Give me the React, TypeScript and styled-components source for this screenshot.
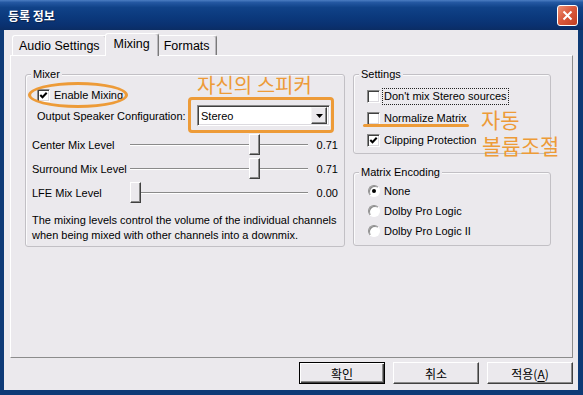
import styled, { createGlobalStyle } from 'styled-components';

const ORANGE = '#ED9B38';
const FACE = '#EBE9ED';

const GlobalStyle = createGlobalStyle`
  html, body {
    margin: 0;
    padding: 0;
    background: #ffffff;
  }
  body {
    font-family: 'Liberation Sans', 'Noto Sans CJK KR', sans-serif;
    font-size: 11px;
    color: #000;
  }
  *, *::before, *::after {
    box-sizing: border-box;
  }
`;

const Window = styled.div`
  width: 583px;
  height: 395px;
  display: flex;
  flex-direction: column;
  background: #0d3a76;
  overflow: hidden;
`;

const TitleBar = styled.div`
  height: 30px;
  flex: none;
  display: flex;
  align-items: center;
  justify-content: space-between;
  padding: 0 5px 0 8px;
  background: linear-gradient(
    180deg,
    #4c7dc2 0%,
    #2458a2 8%,
    #104288 25%,
    #0b387b 60%,
    #0a3170 85%,
    #0b2d64 100%
  );
`;

const Title = styled.span`
  color: #fff;
  font-family: 'Noto Sans CJK KR', sans-serif;
  font-weight: 700;
  font-size: 12px;
  text-shadow: 1px 1px 0 #08204a;
`;

const CloseButton = styled.div`
  width: 21px;
  height: 21px;
  border: 1px solid #fff;
  border-radius: 3px;
  background: linear-gradient(135deg, #ec9074 0%, #da5a3d 45%, #c23f22 100%);
  display: flex;
  align-items: center;
  justify-content: center;
`;

const Frame = styled.div`
  flex: 1;
  display: flex;
  padding: 0 5px 5px 4px;
`;

const Client = styled.div`
  flex: 1;
  display: flex;
  flex-direction: column;
  background: ${FACE};
  padding: 3px 5px 0 6px;
`;

const TabStrip = styled.div`
  height: 22px;
  flex: none;
  display: flex;
  align-items: flex-end;
  padding-left: 2px;
`;

const Tab = styled.div<{ $active?: boolean }>`
  position: relative;
  z-index: ${(p) => (p.$active ? 1 : 0)};
  height: ${(p) => (p.$active ? 23 : 20)}px;
  margin: ${(p) => (p.$active ? '0 -2px -1px -2px' : '0')};
  padding: ${(p) => (p.$active ? '0 8px 2px' : '0 6px')};
  display: flex;
  align-items: center;
  font-size: 12.5px;
  background: ${FACE};
  border: 1px solid;
  border-bottom: none;
  border-color: #fff #7a7a7a #fff #fff;
  border-radius: 3px 3px 0 0;
  box-shadow: inset -1px 0 0 #b9b7bc;
`;

const Panel = styled.div`
  height: 303px;
  flex: none;
  display: flex;
  align-items: flex-start;
  gap: 8px;
  padding: 12px 21px 0 14px;
  border: 1px solid;
  border-color: #fff #8c8c8c #8c8c8c #fff;
`;

const GroupBox = styled.fieldset<{ $width: number }>`
  width: ${(p) => p.$width}px;
  min-width: 0;
  margin: 0;
  padding: 0;
  border: 1px solid #c2c0c5;
  border-radius: 3px;
  box-shadow: inset 1px 1px 0 #fbfbfc;
`;

const GroupLabel = styled.legend`
  margin-left: 5px;
  padding: 0 2px;
  line-height: 13px;
  font-size: 11px;
  background: ${FACE};
`;

const RightColumn = styled.div`
  display: flex;
  flex-direction: column;
  gap: 12px;
`;

const MixerBody = styled.div`
  display: flex;
  flex-direction: column;
  padding: 0 0 3px 6px;
`;

const OptionList = styled.div<{ $pad: string }>`
  display: flex;
  flex-direction: column;
  padding: ${(p) => p.$pad};
`;

const OptionRow = styled.div<{ $h: number }>`
  position: relative;
  height: ${(p) => p.$h}px;
  width: fit-content;
  display: flex;
  align-items: center;
  gap: 2px;
`;

const EnableRow = styled(OptionRow)`
  margin: 6px 0 0 5px;
`;

const OptionText = styled.span<{ $focused?: boolean }>`
  line-height: 13px;
  padding: 1px;
  border: 1px dotted ${(p) => (p.$focused ? '#222' : 'transparent')};
  white-space: nowrap;
`;

const CheckBox = styled.span`
  width: 13px;
  height: 13px;
  flex: none;
  display: flex;
  align-items: center;
  justify-content: center;
  background: #fff;
  border: 1px solid;
  border-color: #8a8a8a #fff #fff #8a8a8a;
  box-shadow: inset 1px 1px 0 #404040, inset -1px -1px 0 #dcdadf;
`;

const Radio = styled.span<{ $checked?: boolean }>`
  position: relative;
  width: 12px;
  height: 12px;
  flex: none;
  border-radius: 50%;
  background: #fff;
  border: 1px solid;
  border-color: #8f8f8f #fff #fff #8f8f8f;
  box-shadow: inset 1px 1px 0 #8a8a8a;
  &::after {
    content: '';
    display: ${(p) => (p.$checked ? 'block' : 'none')};
    position: absolute;
    left: 3px;
    top: 3px;
    width: 4px;
    height: 4px;
    border-radius: 50%;
    background: #000;
  }
`;

const OutputRow = styled.div`
  height: 21px;
  margin: 2px 0 0 5px;
  display: flex;
  align-items: center;
`;

const OutputLabel = styled.span`
  width: 160px;
  flex: none;
  white-space: nowrap;
`;

const ComboWrap = styled.div`
  position: relative;
  width: 133px;
  height: 21px;
`;

const ComboBox = styled.div`
  width: 100%;
  height: 100%;
  display: flex;
  align-items: center;
  justify-content: space-between;
  padding: 2px 2px 2px 3px;
  background: #fff;
  border: 1px solid;
  border-color: #8a8a8a #fff #fff #8a8a8a;
  box-shadow: inset 1px 1px 0 #404040, inset -1px -1px 0 #dcdadf;
`;

const DropButton = styled.span`
  width: 16px;
  height: 17px;
  display: flex;
  align-items: center;
  justify-content: center;
  background: ${FACE};
  border: 1px solid;
  border-color: #f4f4f4 #404040 #404040 #f4f4f4;
  box-shadow: inset -1px -1px 0 #8a8a8a;
`;

const SliderGroup = styled.div`
  display: flex;
  flex-direction: column;
  margin-top: 7px;
`;

const SliderRow = styled.div`
  height: 24px;
  display: flex;
  align-items: center;
`;

const SliderLabel = styled.span`
  width: 98px;
  flex: none;
  white-space: nowrap;
`;

const Track = styled.div`
  position: relative;
  width: 178px;
  height: 24px;
  display: flex;
  align-items: center;
`;

const TrackLine = styled.div`
  width: 100%;
  height: 2px;
  border-top: 1px solid #8a8a8a;
  border-bottom: 1px solid #fff;
`;

const Thumb = styled.div`
  position: absolute;
  top: 1px;
  width: 11px;
  height: 21px;
  background: ${FACE};
  border: 1px solid;
  border-color: #fff #404040 #404040 #fff;
  box-shadow: inset -1px -1px 0 #8a8a8a;
`;

const SliderValue = styled.span`
  width: 22px;
  margin-left: 8px;
  text-align: right;
`;

const Description = styled.p`
  margin: 8px 0 0;
  line-height: 15px;
`;

const ButtonRow = styled.div`
  display: flex;
  justify-content: flex-end;
  gap: 8px;
  margin-top: 4px;
`;

const DialogButton = styled.button<{ $default?: boolean }>`
  width: 86px;
  height: 22px;
  padding: 0;
  font-family: 'Noto Sans CJK KR', 'Liberation Sans', sans-serif;
  font-size: 12px;
  color: #000;
  background: ${FACE};
  border: 1px solid;
  border-color: ${(p) => (p.$default ? '#000' : '#fff #404040 #404040 #fff')};
  box-shadow: ${(p) =>
    p.$default
      ? 'inset 1px 1px 0 #fff, inset -1px -1px 0 #404040, inset -2px -2px 0 #8a8a8a'
      : 'inset -1px -1px 0 #8a8a8a'};
  u {
    text-underline-offset: 2px;
  }
`;

const Ellipse = styled.span`
  position: absolute;
  left: -9px;
  top: -5px;
  width: 100px;
  height: 26px;
  border: 3px solid ${ORANGE};
  border-radius: 50%;
  pointer-events: none;
`;

const Highlight = styled.span`
  position: absolute;
  left: -9px;
  top: -8px;
  width: 146px;
  height: 36px;
  border: 3.5px solid ${ORANGE};
  border-radius: 4px;
  pointer-events: none;
`;

const Underline = styled.span`
  position: absolute;
  left: -4px;
  top: 17px;
  width: 106px;
  height: 3px;
  border-radius: 2px;
  background: ${ORANGE};
`;

const Note = styled.span<{ $left: number; $top: number; $size?: number }>`
  position: absolute;
  left: ${(p) => p.$left}px;
  top: ${(p) => p.$top}px;
  font-family: 'Noto Sans CJK KR', sans-serif;
  font-size: ${(p) => p.$size ?? 20}px;
  line-height: 22px;
  color: ${ORANGE};
  white-space: nowrap;
  pointer-events: none;
`;

const levels = [
  { label: 'Center Mix Level', value: 0.71 },
  { label: 'Surround Mix Level', value: 0.71 },
  { label: 'LFE Mix Level', value: 0 },
];

const settings = [
  { label: "Don't mix Stereo sources", checked: false, focused: true },
  { label: 'Normalize Matrix', checked: false, note: '자동', underline: true },
  { label: 'Clipping Protection', checked: true, note: '볼륨조절' },
];

const encodings = ['None', 'Dolby Pro Logic', 'Dolby Pro Logic II'];

function CheckMark() {
  return (
    <svg width="9" height="9" viewBox="0 0 9 9">
      <path d="M1.3 4 L3.5 6.3 L7.7 1.8" fill="none" stroke="#000" strokeWidth="2" />
    </svg>
  );
}

function App() {
  return (
    <>
      <GlobalStyle />
      <Window>
        <TitleBar>
          <Title>등록 정보</Title>
          <CloseButton>
            <svg width="11" height="11" viewBox="0 0 11 11">
              <path d="M1.5 1.5 L9.5 9.5 M9.5 1.5 L1.5 9.5" stroke="#fff" strokeWidth="2" />
            </svg>
          </CloseButton>
        </TitleBar>
        <Frame>
          <Client>
            <TabStrip>
              <Tab>Audio Settings</Tab>
              <Tab $active>Mixing</Tab>
              <Tab>Formats</Tab>
            </TabStrip>
            <Panel>
              <GroupBox $width={320}>
                <GroupLabel>Mixer</GroupLabel>
                <MixerBody>
                  <EnableRow $h={16}>
                    <CheckBox>
                      <CheckMark />
                    </CheckBox>
                    <OptionText>Enable Mixing</OptionText>
                    <Ellipse />
                  </EnableRow>
                  <OutputRow>
                    <OutputLabel>Output Speaker Configuration:</OutputLabel>
                    <ComboWrap>
                      <ComboBox>
                        <span>Stereo</span>
                        <DropButton>
                          <svg width="7" height="4" viewBox="0 0 7 4">
                            <path d="M0 0 H7 L3.5 4 Z" fill="#000" />
                          </svg>
                        </DropButton>
                      </ComboBox>
                      <Highlight />
                      <Note $left={0} $top={-31}>자신의 스피커</Note>
                    </ComboWrap>
                  </OutputRow>
                  <SliderGroup>
                    {levels.map((level) => (
                      <SliderRow key={level.label}>
                        <SliderLabel>{level.label}</SliderLabel>
                        <Track>
                          <TrackLine />
                          <Thumb style={{ left: Math.round(level.value * (178 - 11)) }} />
                        </Track>
                        <SliderValue>{level.value.toFixed(2)}</SliderValue>
                      </SliderRow>
                    ))}
                  </SliderGroup>
                  <Description>
                    The mixing levels control the volume of the individual channels
                    <br />
                    when being mixed with other channels into a downmix.
                  </Description>
                </MixerBody>
              </GroupBox>
              <RightColumn>
                <GroupBox $width={198}>
                  <GroupLabel>Settings</GroupLabel>
                  <OptionList $pad="4px 0 2px 13px">
                    {settings.map((item, i) => (
                      <OptionRow key={item.label} $h={22}>
                        <CheckBox>{item.checked && <CheckMark />}</CheckBox>
                        <OptionText $focused={item.focused}>{item.label}</OptionText>
                        {item.underline && <Underline />}
                        {item.note && (
                          <Note $left={i === 1 ? 114 : 115} $top={i === 1 ? 1 : 5} $size={21}>
                            {item.note}
                          </Note>
                        )}
                      </OptionRow>
                    ))}
                  </OptionList>
                </GroupBox>
                <GroupBox $width={198}>
                  <GroupLabel>Matrix Encoding</GroupLabel>
                  <OptionList $pad="2px 0 4px 14px">
                    {encodings.map((name, i) => (
                      <OptionRow key={name} $h={20}>
                        <Radio $checked={i === 0} />
                        <OptionText>{name}</OptionText>
                      </OptionRow>
                    ))}
                  </OptionList>
                </GroupBox>
              </RightColumn>
            </Panel>
            <ButtonRow>
              <DialogButton $default>확인</DialogButton>
              <DialogButton>취소</DialogButton>
              <DialogButton>
                적용(<u>A</u>)
              </DialogButton>
            </ButtonRow>
          </Client>
        </Frame>
      </Window>
    </>
  );
}

export default App;
